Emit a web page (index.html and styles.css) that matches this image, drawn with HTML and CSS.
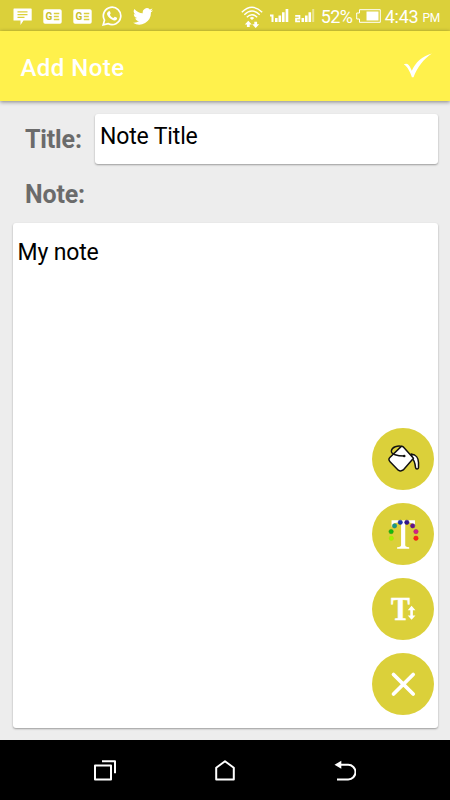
FILE: index.html
```
<!DOCTYPE html>
<html lang="en">
<head>
<meta charset="utf-8">
<title>Add Note</title>
<link rel="stylesheet" href="styles.css">
</head>
<body>
<div class="screen">
  <header class="status">
    <div class="status-left">
      <svg class="message" width="19" height="18" viewBox="0 0 19 18"><path fill="#fff" d="M1 .5h17a.7.7 0 0 1 .7.7v11.2H10.500L7.500 17v-4.600H.5V1.200A.7.7 0 0 1 1 .5z"/><path stroke="#dbd03a" stroke-width="1.200" d="M4.500 3.800h10M4.500 6.600h10M4.500 9.300h7"/></svg>
      <svg width="19" height="15" viewBox="0 0 19 15"><rect x=".3" y=".3" width="18.400" height="14.400" rx="1.800" fill="#fff"/><text class="ge" x="2.500" y="11">G</text><path stroke="#dbd03a" stroke-width="1.400" d="M10.800 4.500h5.500M10.800 7.500h5M10.800 10.500h5.500"/></svg>
      <svg width="19" height="15" viewBox="0 0 19 15"><rect x=".3" y=".3" width="18.400" height="14.400" rx="1.800" fill="#fff"/><text class="ge" x="2.500" y="11">G</text><path stroke="#dbd03a" stroke-width="1.400" d="M10.800 4.500h5.500M10.800 7.500h5M10.800 10.500h5.500"/></svg>
      <svg width="20" height="20" viewBox="0 0 20 20"><path fill="none" stroke="#fff" stroke-width="1.700" d="M1.200 18.800l1.300-4.600A8.700 8.700 0 1 1 6 17.600z"/><path fill="#fff" d="M6.800 5.200c.5-.2 1 0 1.200.4l.7 1.700c.1.300-.8 1.200-.8 1.500.5 1.400 2 2.700 3.400 3.200.5.100 1.200-1.500 1.600-1.300l2 1c.3.200.1 1.200-.2 1.700-.7 1-2.100 1.200-3.300.800-2.900-.8-5.200-3-6.200-5.400-.5-1.300.2-3 1.600-3.600z"/></svg>
      <svg width="20" height="17" viewBox="0 0 24 20"><path fill="#fff" d="M24 2.400a10 10 0 0 1-2.800.8A4.900 4.900 0 0 0 23.300.5a10 10 0 0 1-3.100 1.200 4.900 4.900 0 0 0-8.400 4.500A14 14 0 0 1 1.700 1a4.900 4.900 0 0 0 1.500 6.600 4.900 4.900 0 0 1-2.200-.6 4.900 4.900 0 0 0 4 4.900 4.900 4.900 0 0 1-2.300.1 4.900 4.900 0 0 0 4.600 3.400A9.900 9.900 0 0 1 0 17.500 14 14 0 0 0 21.500 5a10 10 0 0 0 2.500-2.600z"/></svg>
    </div>
    <div class="status-right">
      <svg class="wifi" width="22" height="23" viewBox="0 0 22 23"><path fill="none" stroke="#fff" stroke-width="1.400" d="M.8 6.200Q11-3.800 21.200 6.200M3.300 8.800Q11 1.400 18.700 8.800M5.800 11.200Q11 6.300 16.200 11.200"/><path fill="#fff" d="M8.800 12q2.200-2 4.400 0L11 14z"/><path fill="#fff" d="M3.800 18.400L7.300 14.700l3.500 3.700H8.700v2.600H5.900v-2.600zM11.200 18.300h2.100v-2.600h2.800v2.600h2.100l-3.500 3.700z"/></svg>
      <svg class="sim" width="19" height="14" viewBox="0 0 19 14"><path fill="none" stroke="#fff" stroke-width="2" d="M0 6.500h2.500v6.500"/><path fill="#fff" d="M5 9h2.600v4H5zM8.500 6.500h2.600V13H8.500zM12 3.300h2.600V13H12zM15.600 0h2.700v13h-2.700z"/></svg>
      <svg class="sim2" width="20" height="14" viewBox="0 0 20 14"><path fill="none" stroke="#fff" stroke-width="1.700" d="M.2 6.800h4.300v2.800H1v2.800h4"/><path fill="#fff" d="M6.500 9h2.600v4H6.500zM10 6.500h2.600V13H10zM13.500 3.300h2.600V13h-2.600z"/><path fill="#fff" opacity=".45" d="M17.200 0h2v13h-2z"/></svg>
      <span class="percent">52%</span>
      <svg class="battery" width="25" height="14" viewBox="0 0 25 14"><path fill="none" stroke="#fff" d="M3.500.7h20.800v12.600H3.500V10H.7V4h2.800z"/><path fill="#fff" d="M10.500 2.500h12v9h-12z"/></svg>
      <span class="clock">4:43</span><span class="meridiem">PM</span>
    </div>
  </header>
  <div class="appbar">
    <h1>Add Note</h1>
    <svg width="30" height="25" viewBox="0 0 30 25"><path fill="#fff" d="M.8 11.500c1.600-1.200 3.600-1 4.800.4 1.500 1.800 2.300 3.600 3.200 5.800C12.500 9.500 19 3.200 28.800.5 20.500 6.200 14.500 14 10.500 24.200H8.900C6.900 18.500 4.400 13.300.8 11.500z"/></svg>
  </div>
  <main>
    <div class="title-row">
      <span class="label">Title:</span>
      <div class="card title-card">Note Title</div>
    </div>
    <div class="label note-label">Note:</div>
    <div class="card note-card">My note
      <div class="fabs">
        <div class="fab"><svg viewBox="0 0 63 63"><path fill="#fff" stroke="#111" stroke-width="1.500" stroke-linejoin="round" d="M39.500 26.200c5 .5 7.400 4.300 7.400 8.600v5c0 1.900-2.700 2-3 .1-.5-4.700-1-7.400-3.600-9.200z"/><path fill="#fff" stroke="#111" stroke-width="1.500" stroke-linejoin="round" d="M29 19q1.200-1 2.400 0L41.800 30.500 31.500 42.300q-2.500 1.800-5 .2L18.200 34q-2.200-2.300-.2-4.200z"/><path fill="none" stroke="#111" stroke-width="1.400" d="M30 18.500c-4-1-10 .5-10.500 4.500-.4 3.700 6 5.200 13 5.200"/><circle cx="32.500" cy="28.200" r="1.300" fill="#111"/></svg></div>
        <div class="fab"><svg viewBox="0 0 63 63"><path fill="#fff" d="M19.700 17.500h23.600v6.300H42c-.5-3-1.500-4-4.500-4h-4V42c0 1.800.8 2.400 4 2.500V46H25.300v-1.500c3.200-.1 4-.7 4-2.500V19.800h-4c-3 0-3.900 1-4.300 4h-1.300z"/><g stroke-width="1" stroke-opacity=".55"><circle cx="19.500" cy="35.500" r="2.200" fill="#a5f400" stroke="#b0dc10"/><circle cx="19.300" cy="28.800" r="2.200" fill="#16bc0b" stroke="#259b19"/><circle cx="22.700" cy="23" r="2.200" fill="#159986" stroke="#187f78"/><circle cx="28.500" cy="19.500" r="2.200" fill="#1838b0" stroke="#252f91"/><circle cx="35.100" cy="19.500" r="2.200" fill="#30148e" stroke="#291278"/><circle cx="41" cy="23" r="2.200" fill="#63118b" stroke="#521172"/><circle cx="44.300" cy="28.800" r="2.200" fill="#d51d8a" stroke="#ae1d71"/><circle cx="44.300" cy="35.500" r="2.200" fill="#ff2414" stroke="#df2414"/></g></svg></div>
        <div class="fab"><svg viewBox="0 0 63 63"><text class="size-t" x="19.200" y="42.500" textLength="19" lengthAdjust="spacingAndGlyphs">T</text><path fill="#fff" d="M36 32.400l3.900-4.400 3.900 4.400h-2.600v5.400h2.600l-3.900 4.400-3.900-4.400h2.600v-5.400z"/></svg></div>
        <div class="fab"><svg viewBox="0 0 63 63"><path stroke="#fff" stroke-width="3.800" stroke-linecap="round" d="M21.700 21.700l19.800 19.600M41.500 21.700L21.700 41.300"/></svg></div>
      </div>
    </div>
  </main>
  <nav>
    <svg width="22" height="21" viewBox="0 0 22 21"><path fill="none" stroke="#fff" stroke-width="2" stroke-linejoin="round" d="M1 5.500h16V19.500H1zM8 1.200h13v12"/></svg>
    <svg width="20" height="21" viewBox="0 0 20 21"><path fill="none" stroke="#fff" stroke-width="2" stroke-linejoin="round" d="M1.200 7.800L10 1.300l8.800 6.500v11.700H1.200z"/></svg>
    <svg width="22" height="21" viewBox="0 0 22 21"><path fill="none" stroke="#fff" stroke-width="2" d="M5 4.800h9.200a7.300 7.300 0 0 1 0 14.600H3"/><path fill="#fff" d="M.5 4.800L7.300.8v8z"/></svg>
  </nav>
</div>
</body>
</html>
```
FILE: styles.css
```
body { margin: 0; font-family: Roboto, sans-serif; }
svg { display: block; flex: none; }
.screen { width: 450px; height: 800px; display: flex; flex-direction: column; background: #ededed; overflow: hidden; }
.status { height: 31px; flex: none; background: #dbd03a; color: #fff; display: flex; justify-content: space-between; align-items: center; box-sizing: border-box; padding: 1px 10px 0 13px; }
.status-left { display: flex; align-items: center; gap: 11px; }
.status-left svg:nth-child(4) { margin-left: -1px; }
.message { margin-top: 2px; }
.ge { font: bold 10px Roboto, sans-serif; fill: #c9be28; }
.status-right { display: flex; align-items: center; white-space: nowrap; }
.wifi { position: relative; top: 1px; }
.sim { margin-left: 7px; }
.sim2 { margin-left: 6px; }
.percent { font-size: 18px; margin-left: 6px; width: 32px; letter-spacing: -.5px; }
.battery { margin-left: 3px; }
.clock { font-size: 18px; margin-left: 4px; letter-spacing: -.2px; }
.meridiem { font-size: 12px; margin: 4px 0 0 4px; letter-spacing: -.3px; }
.appbar { height: 70px; flex: none; display: flex; align-items: center; justify-content: space-between; padding: 0 17px 0 20.5px; background: #fff14c; box-shadow: 0 1px 4px rgba(0,0,0,.45); color: #fff; }
.appbar h1 { margin: 3px 0 0; font-size: 24px; line-height: 30px; font-weight: 500; letter-spacing: .45px; }
.appbar svg { margin-bottom: 2px; }
main { flex: 1; min-height: 0; display: flex; flex-direction: column; padding: 13px 12px 12px; }
.title-row { display: flex; height: 50px; }
.label { box-sizing: border-box; padding-left: 13px; font-size: 25px; font-weight: 700; line-height: 30px; letter-spacing: -.15px; color: #6b6b6b; }
.title-row .label { width: 83px; padding-top: 11px; }
.note-label { height: 59px; padding-top: 16px; }
.card { box-sizing: border-box; background: #fff; border-radius: 3px; box-shadow: 0 1px 2px rgba(0,0,0,.35); font-size: 23px; line-height: 30px; letter-spacing: -.15px; color: #000; }
.title-card { flex: 1; padding: 8px 5px; }
.note-card { flex: 1; position: relative; padding: 15px 4.500px; margin-left: 1px; }
.fabs { position: absolute; right: 3.700px; bottom: 13px; display: flex; flex-direction: column; gap: 12.500px; }
.fab { width: 62.500px; height: 62.500px; border-radius: 50%; background: #dbd03a; }
.size-t { font: bold 33px "Liberation Serif", serif; fill: #fff; stroke: #fff; stroke-width: .6px; letter-spacing: 0; }
nav { height: 60px; flex: none; background: #000; display: flex; align-items: center; justify-content: space-between; padding: 0 94px; }
```
